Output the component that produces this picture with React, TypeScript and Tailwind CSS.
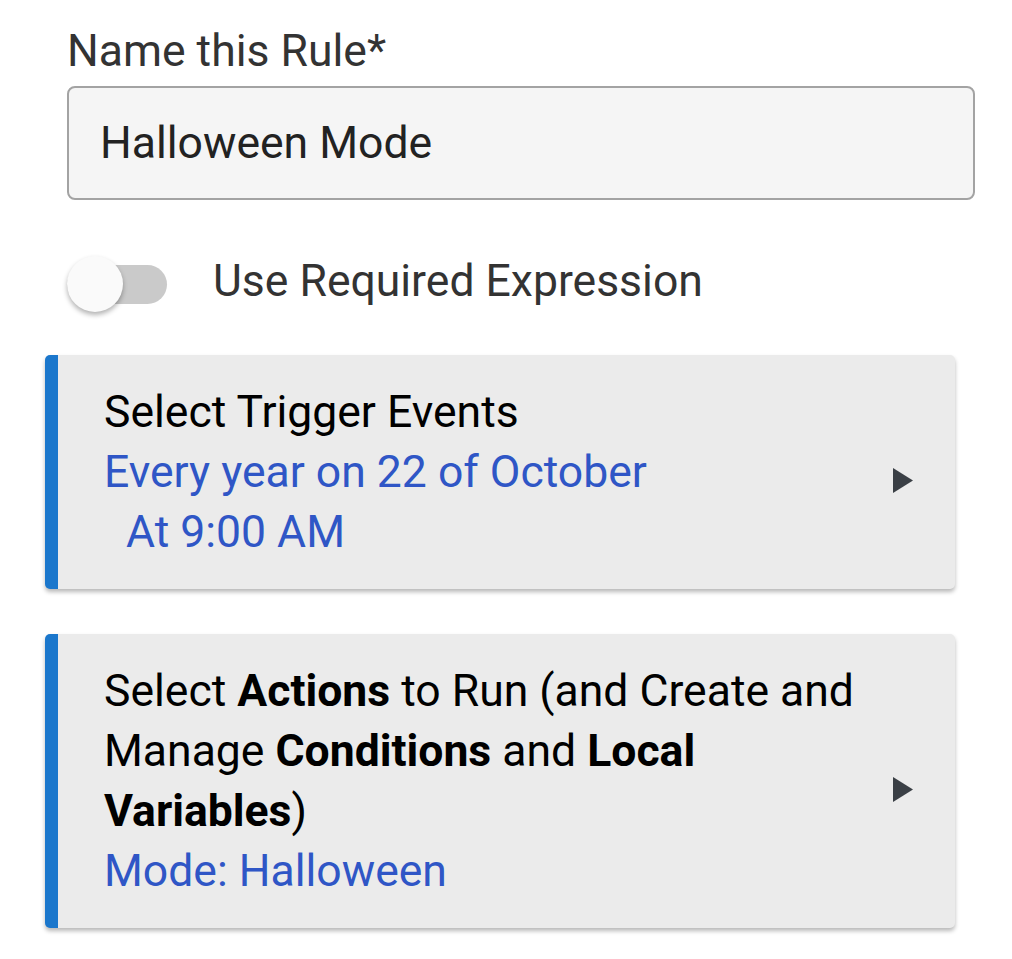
import React from "react";

function Arrow() {
  return (
    <svg width="20" height="25" viewBox="0 0 20 25" className="mt-[17px] shrink-0">
      <path d="M0 0 L20 12.5 L0 25 Z" fill="#3a3f45" />
    </svg>
  );
}

function Card({ children }: { children: React.ReactNode }) {
  return (
    <div className="flex items-center rounded-[5px] border-l-[13px] border-[#1b77cc] bg-[#ebebeb] py-[27px] pl-[46px] pr-[42px] shadow-[0_3px_4px_rgba(0,0,0,0.28)]">
      <div className="flex-1 pr-[10px] text-[44.5px] leading-[60px] text-black">{children}</div>
      <Arrow />
    </div>
  );
}

export default function App() {
  return (
    <div
      className="min-h-screen bg-white pl-[45px] pt-[21px]"
      style={{ fontFamily: "Roboto, 'Noto Sans', sans-serif" }}
    >
      <div className="w-[930px] pl-[22px]">
        <label className="block text-[44.5px] leading-[60px] text-[#333333]">Name this Rule*</label>
        <div className="mt-[5px] flex h-[114px] items-center rounded-[8px] border-2 border-[#a3a3a3] bg-[#f5f5f5] px-[31px] text-[44.5px] text-[#222222]">
          Halloween Mode
        </div>
        <div className="mt-[48px] flex items-center">
          <div className="relative h-[56px] w-[100px]">
            <div className="absolute left-0 right-0 top-[9px] h-[39px] rounded-full bg-[#cacaca]" />
            <div className="absolute left-0 top-0 h-[56px] w-[56px] rounded-full bg-[#fafafa] shadow-[0_3px_5px_rgba(0,0,0,0.3)]" />
          </div>
          <span className="mb-[6px] ml-[46px] text-[44.5px] text-[#333333]">Use Required Expression</span>
        </div>
      </div>

      <div className="mt-[34px] flex w-[910px] flex-col gap-[45px]">
        <Card>
          <div>Select Trigger Events</div>
          <div className="text-[#2f56c6]">Every year on 22 of October</div>
          <div className="pl-[22px] text-[#2f56c6]">At 9:00 AM</div>
        </Card>
        <Card>
          <div>
            Select <b>Actions</b> to Run (and Create and Manage <b>Conditions</b> and <b>Local Variables</b>)
          </div>
          <div className="text-[#2f56c6]">Mode: Halloween</div>
        </Card>
      </div>
    </div>
  );
}
